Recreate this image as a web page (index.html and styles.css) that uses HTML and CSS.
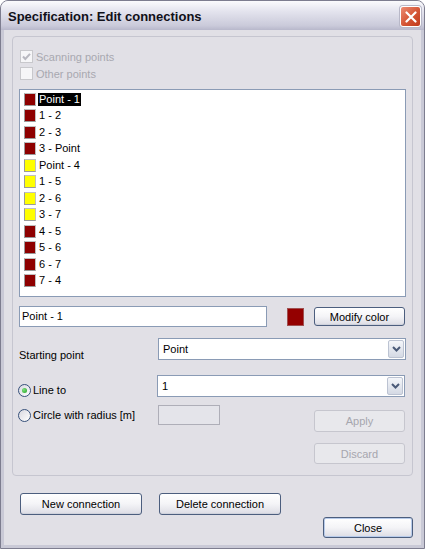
FILE: index.html
```html
<!DOCTYPE html>
<html lang="en">
<head>
    <meta charset="UTF-8">
    <title>Specification: Edit connections</title>
    <link rel="stylesheet" href="styles.css">
</head>
<body>
    <div class="window">
        <div class="titlebar">
            <span class="title">Specification: Edit connections</span>
            <span class="close-btn">
                <svg width="12" height="12" viewBox="0 0 12 12"><path d="M1.5 1.5 L10.5 10.5 M10.5 1.5 L1.5 10.5" stroke="#fff" stroke-width="2.2" stroke-linecap="round"/></svg>
            </span>
        </div>
        <div class="client">
            <div class="group">
                <div class="check disabled">
                    <span class="box">
                        <svg width="11" height="11" viewBox="0 0 11 11"><path d="M2 5.5 L4.3 8 L9 2.8" fill="none" stroke="#b8b8c0" stroke-width="2"/></svg>
                    </span>
                    <span>Scanning points</span>
                </div>
                <div class="check disabled">
                    <span class="box"></span>
                    <span>Other points</span>
                </div>

                <ul class="list">
                    <li class="selected"><span class="swatch red"></span><span class="item-text">Point - 1</span></li>
                    <li><span class="swatch red"></span><span class="item-text">1 - 2</span></li>
                    <li><span class="swatch red"></span><span class="item-text">2 - 3</span></li>
                    <li><span class="swatch red"></span><span class="item-text">3 - Point</span></li>
                    <li><span class="swatch yellow"></span><span class="item-text">Point - 4</span></li>
                    <li><span class="swatch yellow"></span><span class="item-text">1 - 5</span></li>
                    <li><span class="swatch yellow"></span><span class="item-text">2 - 6</span></li>
                    <li><span class="swatch yellow"></span><span class="item-text">3 - 7</span></li>
                    <li><span class="swatch red"></span><span class="item-text">4 - 5</span></li>
                    <li><span class="swatch red"></span><span class="item-text">5 - 6</span></li>
                    <li><span class="swatch red"></span><span class="item-text">6 - 7</span></li>
                    <li><span class="swatch red"></span><span class="item-text">7 - 4</span></li>
                </ul>

                <div class="row name-row">
                    <div class="textbox">Point - 1</div>
                    <span class="color-preview"></span>
                    <button class="btn side-btn">Modify color</button>
                </div>

                <div class="row start-row">
                    <span class="field-label">Starting point</span>
                    <div class="combo">
                        <span class="combo-value">Point</span>
                        <span class="combo-arrow">
                            <svg width="9" height="6" viewBox="0 0 9 6"><path d="M1 1 L4.5 4.5 L8 1" fill="none" stroke="#4a5a78" stroke-width="2"/></svg>
                        </span>
                    </div>
                </div>

                <div class="row line-row">
                    <span class="radio-label"><span class="radio checked"></span>Line to</span>
                    <div class="combo">
                        <span class="combo-value">1</span>
                        <span class="combo-arrow">
                            <svg width="9" height="6" viewBox="0 0 9 6"><path d="M1 1 L4.5 4.5 L8 1" fill="none" stroke="#4a5a78" stroke-width="2"/></svg>
                        </span>
                    </div>
                </div>

                <div class="row circle-row">
                    <span class="radio-label"><span class="radio"></span>Circle with radius [m]</span>
                    <div class="textbox disabled-box"></div>
                    <button class="btn side-btn apply-btn" disabled>Apply</button>
                </div>

                <div class="row discard-row">
                    <button class="btn side-btn" disabled>Discard</button>
                </div>
            </div>

            <div class="footer">
                <div class="footer-left">
                    <button class="btn wide-btn">New connection</button>
                    <button class="btn wide-btn">Delete connection</button>
                </div>
                <button class="btn close-dialog">Close</button>
            </div>
        </div>
    </div>
</body>
</html>
```

FILE: styles.css
```css
* {
    margin: 0;
    padding: 0;
    box-sizing: border-box;
}

body {
    background-color: #ffffff;
    font-family: 'Liberation Sans', Arial, sans-serif;
    font-size: 11px;
    color: #000000;
}

button {
    font: inherit;
    color: inherit;
}

.window {
    width: 425px;
    height: 549px;
    border: 1px solid #7d7d8f;
    border-radius: 8px 8px 0 0;
    background-color: #c9c9d6;
    padding: 0 3px 3px;
    display: flex;
    flex-direction: column;
}

.titlebar {
    height: 31px;
    margin: 0 -3px;
    padding: 2px 3px 0 7px;
    display: flex;
    align-items: center;
    justify-content: space-between;
    background: linear-gradient(#fbfbfd, #e4e4ee 35%, #cacada 85%, #b8b8cb);
    border-radius: 7px 7px 0 0;
}

.title {
    font-size: 13px;
    font-weight: bold;
    color: #101018;
}

.close-btn {
    width: 21px;
    height: 21px;
    border: 1px solid #ffffff;
    border-radius: 3px;
    background: linear-gradient(135deg, #ec8c74, #d45434 55%, #c03a1c);
    box-shadow: 0 0 0 1px #b8b8c8;
    display: flex;
    align-items: center;
    justify-content: center;
}

.client {
    flex: 1;
    background-color: #e1e0e6;
    padding: 6px 8px 7px;
    display: flex;
    flex-direction: column;
}

.group {
    border: 1px solid #c6c6d0;
    border-radius: 4px;
    padding: 11px 6px 11px;
    display: flex;
    flex-direction: column;
}

/* checkboxes */
.check {
    height: 17px;
    display: flex;
    align-items: center;
    gap: 3px;
    padding-left: 1px;
}

.check.disabled {
    color: #a8a8b0;
}

.box {
    width: 13px;
    height: 13px;
    border: 1px solid #c8c8cc;
    background-color: #f6f6f8;
    display: flex;
    align-items: center;
    justify-content: center;
}

/* connection list */
.list {
    list-style: none;
    margin-top: 7px;
    height: 208px;
    border: 1px solid #8a9bb5;
    background-color: #ffffff;
    padding: 1px 4px 0;
}

.list li {
    height: 16.5px;
    display: flex;
    align-items: center;
}

.swatch {
    width: 12px;
    height: 13px;
    border: 1px solid #9a9a9a;
    border-top-color: #c0c0c0;
    border-right-color: #c0c0c0;
    margin-right: 2px;
}

.swatch.red {
    background-color: #8e0000;
}

.swatch.yellow {
    background-color: #ffff00;
}

.item-text {
    padding: 0 1px;
    line-height: 13px;
}

.selected .item-text {
    background-color: #000000;
    color: #ffffff;
}

/* form rows */
.row {
    display: flex;
}

.name-row {
    margin-top: 9px;
    height: 21px;
    align-items: center;
}

.textbox {
    width: 248px;
    height: 21px;
    border: 1px solid #8a9bb5;
    background-color: #ffffff;
    padding-left: 2px;
    line-height: 19px;
}

.color-preview {
    width: 17px;
    height: 18px;
    margin-left: 20px;
    background-color: #940000;
    border: 1px solid #a05050;
}

.btn {
    height: 19px;
    border: 1px solid #4c5e7e;
    border-radius: 3px;
    background: linear-gradient(#ffffff, #f4f4f7 50%, #dcdce4);
    box-shadow: inset 0 -1px 0 #cfd2dc;
}

.btn:disabled {
    border-color: #c6c6ce;
    background: #e8e8ec;
    box-shadow: none;
    color: #a6a6ae;
}

.side-btn {
    width: 91px;
    margin-left: 10px;
    margin-right: 1px;
}

.start-row {
    margin-top: 11px;
}

.field-label {
    width: 139px;
    padding-top: 10px;
    line-height: 14px;
}

.combo {
    width: 248px;
    height: 22px;
    border: 1px solid #8a9bb5;
    background-color: #ffffff;
    display: flex;
}

.combo-value {
    flex: 1;
    padding-left: 4px;
    line-height: 20px;
}

.combo-arrow {
    width: 16px;
    margin: 1px;
    border: 1px solid #bcc3d2;
    border-radius: 2px;
    background: linear-gradient(#f4f6fa, #d4d9e4);
    display: flex;
    align-items: center;
    justify-content: center;
}

.line-row {
    margin-top: 13px;
}

.line-row .radio-label {
    padding-top: 8px;
}

.radio-label {
    width: 139px;
    display: flex;
    align-items: center;
    gap: 2px;
    margin-left: -1px;
    line-height: 14px;
    height: fit-content;
}

.radio {
    width: 13px;
    height: 13px;
    border-radius: 50%;
    border: 1px solid #36507a;
    background: linear-gradient(135deg, #d8d8e0, #ffffff);
    display: flex;
    align-items: center;
    justify-content: center;
}

.radio.checked::after {
    content: '';
    width: 5px;
    height: 5px;
    border-radius: 50%;
    background: radial-gradient(circle at 35% 35%, #7ee07e, #21a121);
}

.circle-row {
    margin-top: 8px;
    align-items: flex-start;
}

.circle-row .radio-label {
    padding-top: 3px;
    margin-right: 1px;
}

.disabled-box {
    width: 62px;
    height: 20px;
    border-color: #aeaeb8;
    background-color: #e4e4ea;
}

.apply-btn {
    margin-left: auto;
    margin-top: 5px;
    height: 22px;
}

.discard-row {
    margin-top: 11px;
    justify-content: flex-end;
}

.discard-row .btn {
    height: 21px;
}

/* bottom buttons */
.footer {
    margin-top: 17px;
    display: flex;
    align-items: flex-start;
}

.footer-left {
    display: flex;
    gap: 17px;
    padding-left: 8px;
}

.wide-btn {
    width: 122px;
    height: 22px;
}

.close-dialog {
    margin-left: auto;
    margin-top: 24px;
    width: 90px;
    height: 21px;
    box-shadow: inset 0 0 0 1px #b8cbea;
}
```
